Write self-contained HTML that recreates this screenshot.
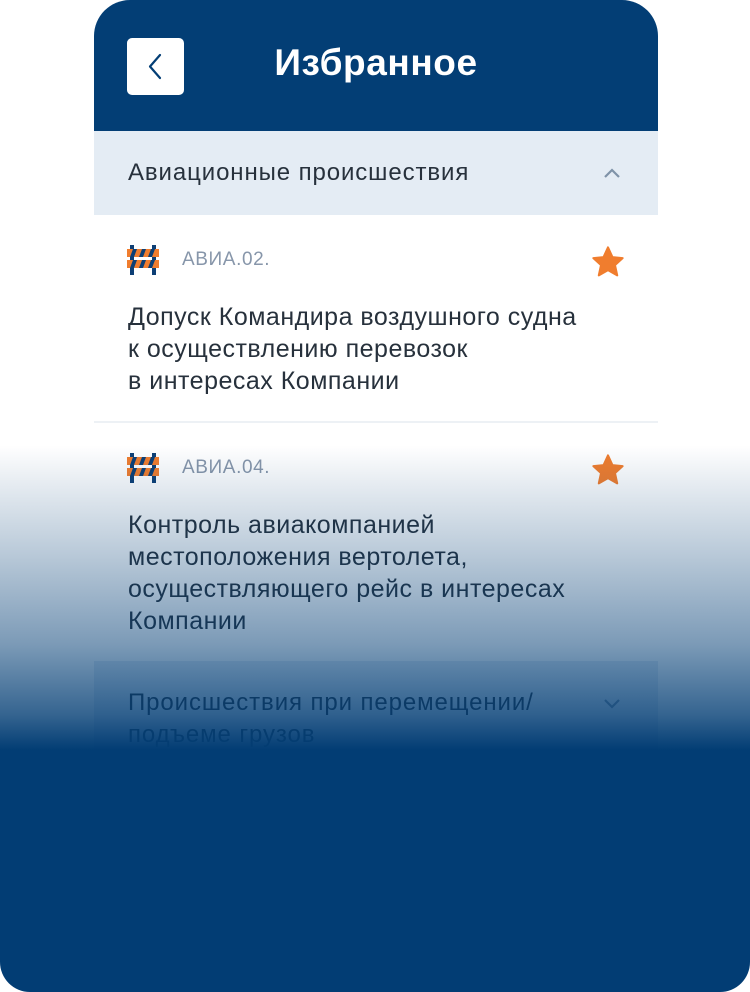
<!DOCTYPE html>
<html><head><meta charset="utf-8"><style>
*{margin:0;padding:0;box-sizing:border-box}
body{width:750px;height:992px;background:#fff;position:relative;overflow:hidden;font-family:"Liberation Sans","DejaVu Sans",sans-serif}
.card{position:absolute;left:94px;top:0;width:564px;height:992px;background:#fff;border-radius:36px 36px 0 0;overflow:hidden}
.hdr{height:131px;background:#033e75;position:relative}
.back{position:absolute;left:33px;top:38px;width:57px;height:57px;background:#fff;border-radius:5px}
.title{position:absolute;left:0;right:0;top:42px;text-align:center;color:#fff;font-weight:bold;font-size:37px;letter-spacing:.6px}
.sec{height:84px;background:#e4ecf4;position:relative;color:#27313c;font-size:24px;letter-spacing:.9px;padding:28px 0 0 34px}
.chev{position:absolute;right:36px;top:36px}
.item{position:relative;height:208px;border-bottom:2px solid #edf1f5}
.icon{position:absolute;left:33px;top:30px}
.code{position:absolute;left:88px;top:34px;color:#8796aa;font-size:19px;letter-spacing:.6px}
.star{position:absolute;right:33px;top:31px}
.txt{position:absolute;left:34px;top:86px;color:#27313c;font-size:25px;letter-spacing:.5px;line-height:32px;white-space:nowrap}
.ov{position:absolute;left:0;top:445px;width:750px;height:547px;border-radius:0 0 30px 30px;background:linear-gradient(rgba(2,61,116,0) 0px,rgba(2,61,116,.1) 40px,rgba(2,61,116,.28) 110px,rgba(2,61,116,.52) 200px,rgba(2,61,116,.8) 270px,#023d74 305px)}
</style></head><body>
<div class="card">
<div class="hdr"><div class="back"><svg width="57" height="57"><path d="M33 17 L23 28.5 L33 40" fill="none" stroke="#033e75" stroke-width="2.2" stroke-linecap="round" stroke-linejoin="round"/></svg></div><div class="title">Избранное</div></div>
<div class="sec">Авиационные происшествия<svg class="chev" width="20" height="12"><path d="M3 10 L10 3 L17 10" fill="none" stroke="#7f93a8" stroke-width="2.2"/></svg></div>
<div class="item">
<svg class="icon" width="32" height="30" viewBox="0 0 32 30"><rect x="3" y="0" width="4" height="30" fill="#0d3f75"/><rect x="25" y="0" width="4" height="30" fill="#0d3f75"/><rect x="0" y="4" width="32" height="8" fill="#f07d2e"/><rect x="0" y="15" width="32" height="8" fill="#f07d2e"/><path d="M6 4h4l-3 8H3zM15 4h4l-3 8h-4zM24 4h4l-3 8h-4zM6 15h4l-3 8H3zM15 15h4l-3 8h-4zM24 15h4l-3 8h-4z" fill="#0d3f75"/></svg>
<div class="code">АВИА.02.</div>
<svg class="star" width="34" height="32" viewBox="0 0 24 23"><path d="M12 1l3.2 7 7.3.7-5.5 5 1.6 7.4L12 17.3 5.4 21.1 7 13.7 1.5 8.7l7.3-.7z" fill="#f07d2e" stroke="#f07d2e" stroke-width="1.5" stroke-linejoin="round"/></svg>
<div class="txt">Допуск Командира воздушного судна<br>к осуществлению перевозок<br>в интересах Компании</div>
</div>
<div class="item" style="border:0;height:238px">
<svg class="icon" width="32" height="30" viewBox="0 0 32 30"><rect x="3" y="0" width="4" height="30" fill="#0d3f75"/><rect x="25" y="0" width="4" height="30" fill="#0d3f75"/><rect x="0" y="4" width="32" height="8" fill="#f07d2e"/><rect x="0" y="15" width="32" height="8" fill="#f07d2e"/><path d="M6 4h4l-3 8H3zM15 4h4l-3 8h-4zM24 4h4l-3 8h-4zM6 15h4l-3 8H3zM15 15h4l-3 8h-4zM24 15h4l-3 8h-4z" fill="#0d3f75"/></svg>
<div class="code">АВИА.04.</div>
<svg class="star" width="34" height="32" viewBox="0 0 24 23"><path d="M12 1l3.2 7 7.3.7-5.5 5 1.6 7.4L12 17.3 5.4 21.1 7 13.7 1.5 8.7l7.3-.7z" fill="#f07d2e" stroke="#f07d2e" stroke-width="1.5" stroke-linejoin="round"/></svg>
<div class="txt">Контроль авиакомпанией<br>местоположения вертолета,<br>осуществляющего рейс в интересах<br>Компании</div>
</div>
<div class="sec" style="height:100px;padding-top:26px;line-height:32px">Происшествия при перемещении/<br>подъеме грузов<svg class="chev" width="20" height="12" style="top:36px"><path d="M3 3 L10 10 L17 3" fill="none" stroke="#7f93a8" stroke-width="2.2"/></svg></div>
</div>
<div class="ov"></div>
</body></html>
